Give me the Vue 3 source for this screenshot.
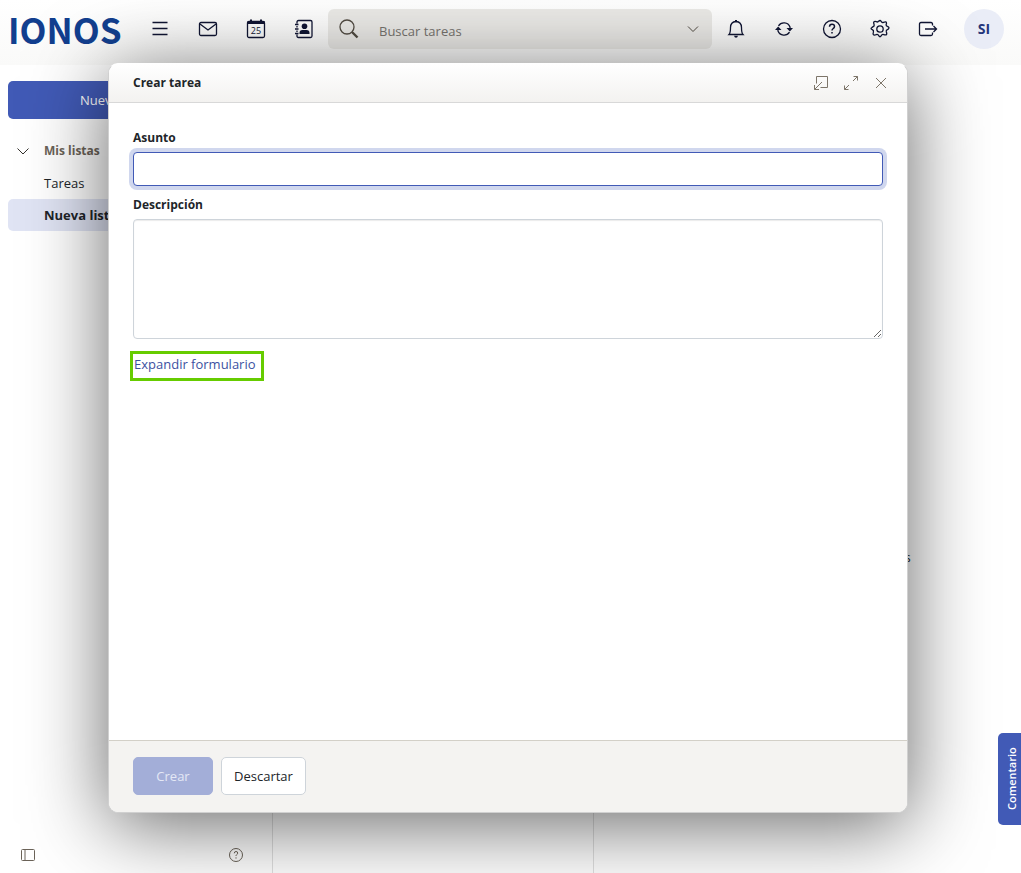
<script setup>
import { ref, onMounted } from 'vue'

const subject = ref('')
const description = ref('')
const query = ref('')
const subjectInput = ref(null)
const lists = ['Tareas', 'Nueva lista']
const activeList = ref('Nueva lista')

onMounted(() => subjectInput.value.focus())
</script>

<template>
  <div class="app">
    <header class="topbar">
      <a class="logo" href="#">IONOS</a>
      <button class="tool" aria-label="Menú">
        <svg width="20" height="20" viewBox="0 0 20 20"><path d="M2.500 3.500h15M2.500 9.500h15M2.500 15.500h15" /></svg>
      </button>
      <button class="tool" aria-label="Correo">
        <svg width="20" height="20" viewBox="0 0 20 20"><rect x="1.500" y="3.500" width="17" height="13" rx="1.500" /><path d="M2 5l8 6 8-6" /></svg>
      </button>
      <button class="tool" aria-label="Calendario">
        <svg width="20" height="20" viewBox="0 0 20 20">
          <rect x="1.500" y="2.500" width="17" height="16" rx="1.500" />
          <path class="fill" d="M1.500 2h2.500v-1.500h2v1.500h8v-1.500h2v1.500h2.500v3h-17z" />
          <text x="10" y="14.500" text-anchor="middle">25</text>
        </svg>
      </button>
      <button class="tool" aria-label="Contactos">
        <svg width="20" height="20" viewBox="0 0 20 20">
          <path d="M3 4.500V3Q3 1.500 4.500 1.500H16.500Q18 1.500 18 3v14q0 1.500-1.500 1.500H4.500Q3 18.500 3 17v-1.500M3 7v1.500M3 11.500V13M1 5.500h3.500M1 10h3.500M1 14.500h3.500" />
          <circle class="fill" cx="10.500" cy="7.200" r="2.800" /><path class="fill" d="M5.500 15v-1q0-3 3-3h4q3 0 3 3v1z" />
        </svg>
      </button>
      <div class="search">
        <svg width="22" height="22" viewBox="0 0 22 22"><circle cx="9" cy="9" r="7" /><path d="M14 14l1 1" /><path d="M14.500 14.500l5 5" stroke-width="2.400" /></svg>
        <input v-model="query" type="search" placeholder="Buscar tareas" aria-label="Buscar tareas" />
        <button class="caret" aria-label="Opciones de búsqueda">
          <svg width="12" height="12" viewBox="0 0 12 12"><path d="M1 3.500l5 5 5-5" /></svg>
        </button>
      </div>
      <button class="tool" aria-label="Notificaciones">
        <svg width="20" height="20" viewBox="0 0 20 20"><path d="M3 15.500Q4.500 14 4.500 8.500Q4.500 3 10 2.500Q15.500 3 15.500 8.500Q15.500 14 17 15.500z" /><path class="fill" d="M9 2V1h2v1zM8 16.800h4q-.5 1.900-2 1.900t-2-1.900z" /></svg>
      </button>
      <button class="tool" aria-label="Actualizar">
        <svg width="20" height="20" viewBox="0 0 20 20"><path d="M4.500 6.800a6.500 6.500 0 0 1 11.500 1.200v2M15.500 13.200a6.500 6.500 0 0 1-11.500-1.200v-2" /><path class="fill" d="M1 11l3.200-3.500L7.500 11zM12.500 9H19l-3.200 3.500z" /></svg>
      </button>
      <button class="tool" aria-label="Ayuda">
        <svg width="20" height="20" viewBox="0 0 20 20"><circle cx="10" cy="10" r="8.500" /><path d="M7.500 7.800q0-2.600 2.500-2.600t2.500 2.200q0 1.300-1.300 2.100-1.200.8-1.200 2M10 13v1.600" stroke-width="1.500" /></svg>
      </button>
      <button class="tool" aria-label="Ajustes">
        <svg width="20" height="20" viewBox="0 0 20 20"><circle cx="10" cy="10" r="3.200" /><path d="M8.700 2.500q1.300-2 2.600 0 .6 1.500 2.200.8 2.600-1 2.900.3.300 1-.3 2.100 0 1.300 1.400 1.700 2.300 1.100 1 2.300-.2.500-1.100 1-1.500.5-1.100 2 1 2.600-.2 3.100-.8.400-2.300-.2-1.700-.7-2.500 1-1.300 2.300-2.600 0-.8-1.700-2.500-1-2.600 1-3-.3-.3-.8.200-2 .6-1.800-1.100-2.600-2.300-1.100-.3-2.200.300-.400 1.200-.9 1.400-.6.900-2-1-2.600.2-3 .8-.4 2 .100 1.700.8 2.500-.9z" /></svg>
      </button>
      <button class="tool" aria-label="Cerrar sesión">
        <svg width="20" height="20" viewBox="0 0 20 20"><path d="M14.500 6.500V5q0-1.500-1.500-1.500H3Q1.500 3.500 1.500 5v10q0 1.500 1.500 1.500h10q1.500 0 1.500-1.500v-1.500M7 10h11M15.500 7l3 3-3 3" /></svg>
      </button>
      <button class="avatar" aria-label="Cuenta">SI</button>
    </header>

    <main class="content">
      <aside class="sidebar">
        <div class="split">
          <button class="new">Nueva tarea</button>
          <button class="more" aria-label="Más opciones"></button>
        </div>
        <button class="folder-head">
          <svg width="14" height="14" viewBox="0 0 14 14"><path d="M1.500 4.500L7 10l5.500-5.500" /></svg>
          Mis listas
        </button>
        <nav class="folders">
          <a v-for="name in lists" :key="name" href="#" :class="{ active: name === activeList }" @click.prevent="activeList = name">{{ name }}</a>
        </nav>
        <footer class="side-tools">
          <button aria-label="Barra lateral">
            <svg width="16" height="16" viewBox="0 0 16 16"><rect x="1.500" y="2.500" width="13" height="11" rx="1" /><path d="M5 2.500v11" /></svg>
          </button>
          <button aria-label="Ayuda">
            <svg width="16" height="16" viewBox="0 0 16 16"><circle cx="8" cy="8" r="6.500" /><path d="M6.300 6.300q0-1.800 1.700-1.800t1.700 1.500q0 1-.9 1.500-.8.500-.8 1.500M8 10.300v1.300" /></svg>
          </button>
        </footer>
      </aside>
      <section class="list-pane"></section>
      <section class="detail-pane">No se han seleccionado elementos</section>
    </main>

    <div class="overlay">
      <form class="dialog" role="dialog" aria-labelledby="dialog-title" @submit.prevent>
        <header class="dialog-head">
          <h1 id="dialog-title">Crear tarea</h1>
          <button type="button" aria-label="Minimizar">
            <svg width="16" height="16" viewBox="0 0 16 16"><path d="M3.500 8.500v-7h11v11h-7M9 7l-7.500 7.500M1.500 10v4.500H6" /></svg>
          </button>
          <button type="button" aria-label="Maximizar">
            <svg width="16" height="16" viewBox="0 0 16 16"><path d="M10 6l4.500-4.500M10.500 1.500h4v4M6 10l-4.500 4.500M1.500 10.500v4h4" /></svg>
          </button>
          <button type="button" aria-label="Cerrar">
            <svg width="16" height="16" viewBox="0 0 16 16"><path d="M3 3l10 10M13 3L3 13" /></svg>
          </button>
        </header>
        <div class="dialog-body">
          <label for="subject">Asunto</label>
          <input id="subject" ref="subjectInput" v-model="subject" type="text" />
          <label for="description">Descripción</label>
          <textarea id="description" v-model="description"></textarea>
          <a class="expand" href="#">Expandir formulario</a>
        </div>
        <footer class="dialog-foot">
          <button class="create" type="submit" disabled>Crear</button>
          <button class="discard" type="button">Descartar</button>
        </footer>
      </form>
    </div>

    <button class="feedback">Comentario</button>
  </div>
</template>

<style>
html,
body,
#app {
  height: 100%;
  overflow: hidden;
}
</style>

<style scoped>
.app {
  position: relative;
  display: flex;
  flex-direction: column;
  height: 100vh;
  background: #fff;
  color: #212529;
  font: 13px/20px "Open Sans", "Noto Sans", sans-serif;
}
* {
  box-sizing: border-box;
}
button {
  margin: 0;
  padding: 0;
  border: 0;
  background: none;
  color: inherit;
  font: inherit;
}
a {
  color: inherit;
  text-decoration: none;
}
svg {
  display: block;
  fill: none;
  stroke: currentColor;
}
.topbar {
  display: flex;
  align-items: center;
  height: 65px;
  padding: 0 17px 7px 8px;
  background: linear-gradient(#fff, #fafaf9);
  color: #101533;
}
.logo {
  width: 128px;
  color: #123f8f;
  font: bold 35px/40px "Noto Sans CJK SC", "DejaVu Sans Condensed", sans-serif;
}
.tool {
  display: grid;
  place-items: center;
  flex: none;
  width: 48px;
  height: 40px;
}
.tool svg {
  stroke-width: 1.3;
}
.tool .fill {
  fill: currentColor;
  stroke: none;
}
.tool text {
  fill: currentColor;
  stroke: none;
  font-size: 9px;
}
.search {
  display: flex;
  align-items: center;
  flex: 1;
  height: 40px;
  padding: 0 13px 0 10px;
  border-radius: 6px;
  background: #ebeae7;
  color: #514b42;
}
.search svg {
  flex: none;
  stroke-width: 1.3;
}
.search input {
  flex: 1;
  min-width: 0;
  height: 40px;
  padding: 4px 0 0 19px;
  border: 0;
  outline: 0;
  background: none;
  font: inherit;
}
.search input::placeholder {
  color: #76736e;
  opacity: 1;
}
.caret svg {
  stroke-width: 1;
}
.avatar {
  flex: none;
  width: 40px;
  height: 40px;
  margin-left: 12px;
  border-radius: 50%;
  background: #eaedf7;
  color: #26377c;
  font-size: 14px;
  font-weight: 700;
}
.content {
  display: flex;
  flex: 1;
  min-height: 0;
}
.sidebar {
  display: flex;
  flex-direction: column;
  width: 273px;
  padding: 16px 8px 8px;
  border-right: 1px solid #e0e0e0;
}
.split {
  display: flex;
  height: 38px;
  margin-bottom: 16px;
  border-radius: 5px;
  background: #415ab6;
  color: #fff;
}
.new {
  flex: 1;
  font-weight: 500;
}
.more {
  width: 38px;
}
.folder-head {
  display: flex;
  align-items: center;
  gap: 14px;
  height: 32px;
  padding-left: 8px;
  color: #6b6358;
  font-size: 12px;
  font-weight: 700;
}
.folder-head svg {
  color: #33302c;
}
.folders a {
  display: block;
  padding: 6px 36px;
  border-radius: 5px;
}
.folders .active {
  background: #e0e4f4;
  font-weight: 700;
}
.side-tools {
  display: flex;
  justify-content: space-between;
  margin-top: auto;
  padding: 0 20px 2px 12px;
  color: #6b6358;
}
.list-pane {
  width: 321px;
  border-right: 1px solid #e0e0e0;
}
.detail-pane {
  display: grid;
  place-items: center;
  flex: 1;
  padding: 176px 4px 0 0;
}
.overlay {
  position: absolute;
  inset: 0;
  display: flex;
  padding: 63px 113px 60px 108px;
}
.dialog {
  display: flex;
  flex-direction: column;
  flex: 1;
  overflow: hidden;
  border: 1px solid #d0d0d0;
  border-top-color: #fff;
  border-radius: 10px;
  background: #fff;
  box-shadow: 0 12px 80px rgba(0, 0, 0, 0.6);
}
.dialog-head {
  display: flex;
  align-items: center;
  gap: 14px;
  height: 39px;
  padding: 0 18px 0 24px;
  border-bottom: 1px solid #d8d8d8;
  background: linear-gradient(#fff, #f3f2f0);
  color: #7d7569;
}
.dialog-head h1 {
  flex: 1;
  margin: 0;
  color: #212529;
  font-size: 12px;
  font-weight: 700;
}
.dialog-body {
  display: flex;
  flex-direction: column;
  align-items: flex-start;
  flex: 1;
  padding: 24px;
}
.dialog-body label {
  height: 25px;
  font-size: 12px;
  line-height: 22px;
  font-weight: 700;
}
.dialog-body input,
.dialog-body textarea {
  width: 100%;
  border: 1px solid #ced4da;
  border-radius: 4px;
  outline: 0;
  background: #fff;
  font: inherit;
}
.dialog-body input {
  height: 34px;
  margin-bottom: 8px;
  padding: 0 12px;
}
.dialog-body input:focus {
  border-color: #415ab6;
  box-shadow: 0 0 0 4px #d0d7ee;
}
.dialog-body textarea {
  height: 120px;
  margin-bottom: 12px;
  padding: 6px 12px;
  resize: vertical;
  box-shadow: inset 0 1px 1px rgba(0, 0, 0, 0.08);
}
.expand {
  margin-left: -3px;
  padding: 0 5px 4px 1px;
  border: 3px solid #66cc00;
  color: #3c519f;
}
.dialog-foot {
  display: flex;
  gap: 8px;
  padding: 16px 24px 17px;
  border-top: 1px solid #d3d0c8;
  background: #f4f3f1;
}
.dialog-foot button {
  height: 38px;
  padding: 0 12px;
  border: 1px solid #ced4da;
  border-radius: 5px;
  background: #fff;
}
.dialog-foot .create {
  min-width: 80px;
  border-color: #a3aed8;
  background: #a3aed8;
  color: #e4e8f5;
}
.feedback {
  position: absolute;
  right: 0;
  bottom: 48px;
  width: 23px;
  height: 92px;
  padding-right: 4px;
  border-radius: 0 5px 5px 0;
  background: #415ab6;
  color: #fff;
  font-size: 11px;
  font-weight: 600;
  writing-mode: vertical-rl;
  transform: rotate(180deg);
}
</style>
